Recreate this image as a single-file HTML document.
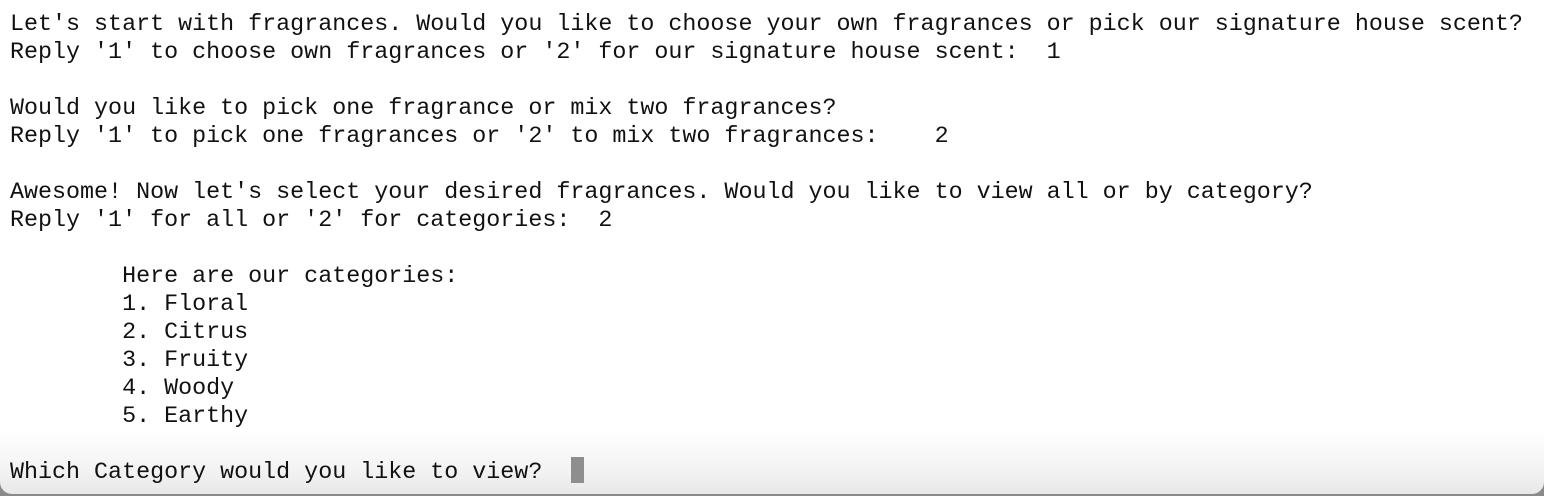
<!DOCTYPE html>
<html><head><style>
html,body{margin:0;padding:0;}
body{width:1544px;height:496px;background:#8a8a8a;position:relative;overflow:hidden;}
.win{position:absolute;left:0;top:0;width:1544px;height:494px;border-radius:0 0 12px 12px;
background:linear-gradient(to bottom,#ffffff 0px,#ffffff 430px,#f3f3f3 470px,#e8e8e8 494px);}
pre{position:absolute;left:10px;top:11px;margin:0;font-family:"Liberation Mono",monospace;font-size:23.35px;line-height:28px;color:#111;}
.cur{position:absolute;left:571px;top:457px;width:13px;height:26px;background:#8e8e8e;}
</style></head><body><div class="win">
<pre>Let's start with fragrances. Would you like to choose your own fragrances or pick our signature house scent?
Reply '1' to choose own fragrances or '2' for our signature house scent:  1

Would you like to pick one fragrance or mix two fragrances?
Reply '1' to pick one fragrances or '2' to mix two fragrances:    2

Awesome! Now let's select your desired fragrances. Would you like to view all or by category?
Reply '1' for all or '2' for categories:  2

        Here are our categories:
        1. Floral
        2. Citrus
        3. Fruity
        4. Woody
        5. Earthy

Which Category would you like to view?  </pre>
<div class="cur"></div>
</div></body></html>
